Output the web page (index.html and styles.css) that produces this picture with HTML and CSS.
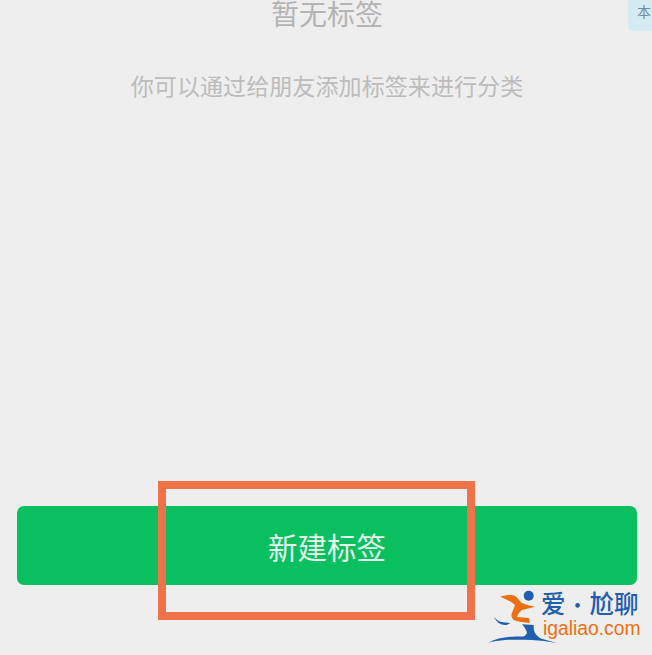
FILE: index.html
```html
<!DOCTYPE html>
<html lang="zh-CN">
<head>
<meta charset="utf-8">
<title>暂无标签</title>
<link rel="stylesheet" href="styles.css">
</head>
<body>
<main class="page">
  <h1 class="title">暂无标签</h1>
  <p class="subtitle">你可以通过给朋友添加标签来进行分类</p>
  <div class="actions">
    <button class="primary" type="button">新建标签</button>
  </div>
  <div class="highlight"></div>
  <div class="corner-tab">本</div>
  <div class="logo">
    <svg class="logo-mark" width="72" height="56" viewBox="0 0 72 56">
      <circle cx="40.7" cy="5.7" r="5" fill="#1f5fae"/>
      <path d="M12 6.7 C18 5 24 4.5 27 6 C30 8 32 12 34 13 C38 15 43 15.5 47 16.7 C42 18 38 19 34 20 C31 22 29.5 25 29 27 C33 27.5 37 27.5 40.7 28 L42 33 C36 32.5 30 32 25.7 30 C23 27 23 25 24 23 C25 20 26.5 17 27 15 C25 12.5 18 9 12 6.7 Z" fill="#ee6f12"/>
      <path d="M5.7 26.7 C8 29 10 31 12.3 31.7 C16 32.5 19 32.5 22.3 33 C20 34.5 18.5 35 17 35 C15 35 12.5 34 10.7 33 C8.5 31 7 29 5.7 26.7 Z" fill="#1f5fae"/>
      <path d="M34 34.3 L45.7 35 C45.5 38 46 41 47 43 C49 46 52 48.5 55.7 50 C48 49 41 48 34 48 C36 46.5 38 45 39 43 C38.5 40 36.5 37 34 34.3 Z" fill="#1f5fae"/>
      <path d="M0 52.7 C8 49 16 47 24 46.7 C34 46.3 44 46.5 50.7 48 C57 49.5 63 51.5 69 53.3 C60 51.5 52 50.3 44 50 C35 49.7 26 49.5 17.3 50 C11 50.5 5 51.5 0 52.7 Z" fill="#1f5fae"/>
    </svg>
    <div class="logo-text">
      <div class="logo-cn">爱<span class="logo-dot">·</span>尬聊</div>
      <div class="logo-en">igaliao.com</div>
    </div>
  </div>
</main>
</body>
</html>
```
FILE: styles.css
```css
* { box-sizing: border-box; }
html, body { margin: 0; height: 100%; }
body {
  background: #eeeeee;
  overflow: hidden;
  font-family: "Noto Sans CJK SC", "Liberation Sans", sans-serif;
}
.page {
  position: relative;
  width: 652px;
  height: 655px;
  display: flex;
  flex-direction: column;
  align-items: center;
}
.title {
  margin: -7px 0 0;
  padding-left: 2px;
  font-size: 28px;
  line-height: 40px;
  font-weight: 400;
  color: #b4b4b4;
}
.subtitle {
  margin: 35px 0 0;
  padding-left: 2px;
  font-size: 23.1px;
  line-height: 34px;
  color: #bcbcbc;
}
.actions {
  margin-top: auto;
  margin-bottom: 70px;
  width: 100%;
  padding: 0 15px 0 17px;
}
.primary {
  display: block;
  width: 100%;
  height: 79px;
  border: 0;
  border-radius: 7px;
  background: #0abf60;
  color: #e6f5ec;
  font: inherit;
  font-size: 29.5px;
}
.highlight {
  position: absolute;
  left: 158px;
  top: 481px;
  width: 317px;
  height: 139px;
  border: 8px solid #f07248;
}
.corner-tab {
  position: absolute;
  right: 0;
  top: -4px;
  width: 24px;
  height: 35px;
  padding: 5px 0 0 9px;
  border-radius: 0 0 0 5px;
  background: #d6eaf3;
  color: #6f8ea3;
  font-size: 14px;
  line-height: 20px;
  overflow: hidden;
}
.logo {
  position: absolute;
  left: 488px;
  top: 590px;
  display: flex;
  align-items: flex-start;
}
.logo-mark { flex: none; margin-right: -19px; }
.logo-text { margin-top: -3px; }
.logo-cn {
  font-size: 24.5px;
  line-height: 32px;
  font-weight: 500;
  color: #1f5fae;
  white-space: nowrap;
}
.logo-dot { margin: 0 2px; font-size: 20px; }
.logo-en {
  margin-top: -3px;
  margin-left: 2px;
  font-family: "Liberation Sans", sans-serif;
  font-size: 19.3px;
  line-height: 22px;
  color: #ee6f12;
  white-space: nowrap;
}
```
